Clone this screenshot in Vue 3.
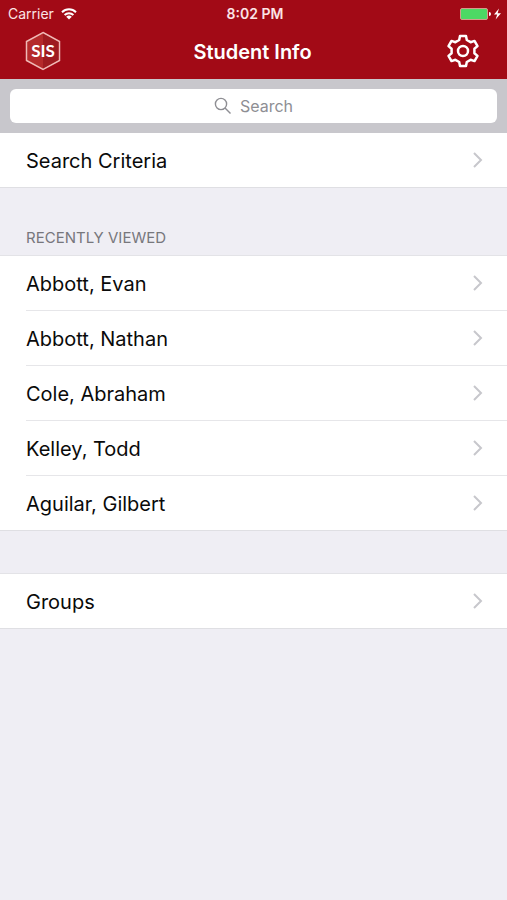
<script setup>
import { ref } from "vue";

const search = ref("");

const groups = ref([
  { id: 1, title: "", rows: ["Search Criteria"] },
  {
    id: 2,
    title: "Recently Viewed",
    rows: [
      "Abbott, Evan",
      "Abbott, Nathan",
      "Cole, Abraham",
      "Kelley, Todd",
      "Aguilar, Gilbert",
    ],
  },
  { id: 3, title: "", rows: ["Groups"] },
]);
</script>

<template>
  <div class="app">
    <header class="header">
      <div class="status">
        <span class="carrier">
          Carrier
          <svg class="wifi" viewBox="0 0 16 12" width="16" height="12">
            <path d="M1 4.2a10 10 0 0 1 14 0M3.6 7a6.3 6.3 0 0 1 8.8 0" />
            <path class="dot" d="M8 11.6L5.2 8.8a4 4 0 0 1 5.6 0z" />
          </svg>
        </span>
        <span class="time">8:02 PM</span>
        <span class="power">
          <svg viewBox="0 0 42 14" width="42" height="14">
            <rect class="battery" x="0.5" y="1.5" width="27" height="11" rx="1.5" />
            <path class="white" d="M29 5a2 2 0 0 1 0 4z" />
            <path class="white" d="M39 1.5L34 7.6h3.2L35.6 12.5 41 6.2h-3.4z" />
          </svg>
        </span>
      </div>

      <div class="nav">
        <a href="#" class="logo" aria-label="Home">
          <svg viewBox="0 0 36 40" width="36" height="40">
            <path class="hex" d="M18 1.5L34.5 10.5V29.5L18 38.5L1.5 29.5V10.5Z" />
            <path class="shade" d="M18 2.5L33.5 11V29L18 37.5Z" />
            <text x="18" y="26" text-anchor="middle">SIS</text>
          </svg>
        </a>
        <h1>Student Info</h1>
        <button type="button" class="settings" aria-label="Settings">
          <svg viewBox="-17 -17 34 34" width="34" height="34">
            <path
              d="M-3-15H3L3.8-11L7.6-8.8L11.5-10.1L14.5-4.9L11.4-2.2V2.2L14.5 4.9L11.5 10.1L7.6 8.8L3.8 11L3 15H-3L-3.8 11L-7.6 8.8L-11.5 10.1L-14.5 4.9L-11.4 2.2V-2.2L-14.5-4.9L-11.5-10.1L-7.6-8.8L-3.8-11Z"
            />
            <circle r="5" />
          </svg>
        </button>
      </div>
    </header>

    <form class="search-bar" @submit.prevent>
      <label class="search-field">
        <svg viewBox="0 0 18 18" width="18" height="18">
          <circle cx="7" cy="7" r="5.6" />
          <path d="M11 11L16.5 16.5" />
        </svg>
        <input
          v-model.trim="search"
          type="text"
          placeholder="Search"
          aria-label="Search"
        />
      </label>
    </form>

    <section v-for="{ id, title, rows } in groups" :key="id" class="group">
      <h2 v-if="title">{{ title }}</h2>
      <ul class="list">
        <li v-for="row in rows" :key="row">
          <a href="#" class="row">
            <span>{{ row }}</span>
            <svg viewBox="0 0 12 18" width="12" height="18">
              <path d="M2 2L9 9L2 16" />
            </svg>
          </a>
        </li>
      </ul>
    </section>
  </div>
</template>

<style>
body {
  background: #efeef4;
}
</style>

<style scoped>
.app {
  font-family: Inter, Roboto, sans-serif;
  color: #0a0a0a;
}

svg {
  display: block;
}

/* header */
.header {
  background: #a20a16;
  color: #fff;
}
.status {
  display: grid;
  grid-template-columns: 1fr auto 1fr;
  align-items: center;
  height: 27px;
  padding: 0 5px 0 8px;
  font-size: 14px;
  color: #fbe4e5;
}
.carrier {
  display: flex;
  align-items: center;
  gap: 7px;
}
.wifi {
  fill: none;
  stroke: #fff;
  stroke-width: 2;
}
.wifi .dot {
  fill: #fff;
  stroke: none;
}
.time {
  font-weight: 600;
}
.power {
  justify-self: end;
}
.battery {
  fill: #4cd964;
  stroke: #d69a8c;
}
.white {
  fill: #fff;
}
.nav {
  display: grid;
  grid-template-columns: 1fr auto 1fr;
  align-items: center;
  height: 52px;
  padding: 0 27px 4px 25px;
  box-sizing: border-box;
}
.hex {
  fill: #b52a2b;
  stroke: #f0b9b6;
  stroke-width: 1.5;
}
.shade {
  fill: #8f1319;
  opacity: 0.6;
}
.logo {
  justify-self: start;
}
.logo text {
  fill: #fff;
  font: 700 17px Lato, sans-serif;
}
h1 {
  margin: 0;
  padding-top: 2px;
  font-size: 20px;
  line-height: 24px;
  font-weight: 600;
}
.settings {
  justify-self: end;
  padding: 0;
  border: 0;
  background: none;
  cursor: pointer;
}
.settings svg {
  fill: none;
  stroke: #fff;
  stroke-width: 2.5;
  stroke-linejoin: round;
}

/* search */
.search-bar {
  padding: 10px;
  background: #c8c7cc;
}
.search-field {
  display: flex;
  align-items: center;
  justify-content: center;
  gap: 8px;
  height: 34px;
  border-radius: 6px;
  background: #fff;
}
.search-field svg {
  fill: none;
  stroke: #8e8e93;
  stroke-width: 1.4;
}
.search-field input {
  field-sizing: content;
  padding: 0;
  border: 0;
  outline: 0;
  background: none;
  font: 16px Inter, Roboto, sans-serif;
  color: inherit;
}
.search-field input::placeholder {
  color: #8e8e93;
}

/* lists */
.group + .group {
  margin-top: 42px;
}
h2 {
  margin: 0;
  padding: 0 26px 9px;
  font-size: 15px;
  line-height: 16px;
  font-weight: 400;
  text-transform: uppercase;
  color: #77777c;
}
.list {
  margin: 0;
  padding: 0;
  list-style: none;
  background: #fff;
  border-bottom: 1px solid #dfdfe3;
}
.group + .group .list {
  border-top: 1px solid #e3e3e7;
}
.list li {
  padding-left: 26px;
}
.row {
  display: flex;
  align-items: center;
  justify-content: space-between;
  height: 54px;
  padding-right: 23px;
  font-size: 20px;
  color: inherit;
  text-decoration: none;
}
.row span {
  padding-top: 2px;
}
li + li .row {
  border-top: 1px solid #e6e6e9;
}
.row svg {
  fill: none;
  stroke: #c7c7cc;
  stroke-width: 2;
}
</style>
